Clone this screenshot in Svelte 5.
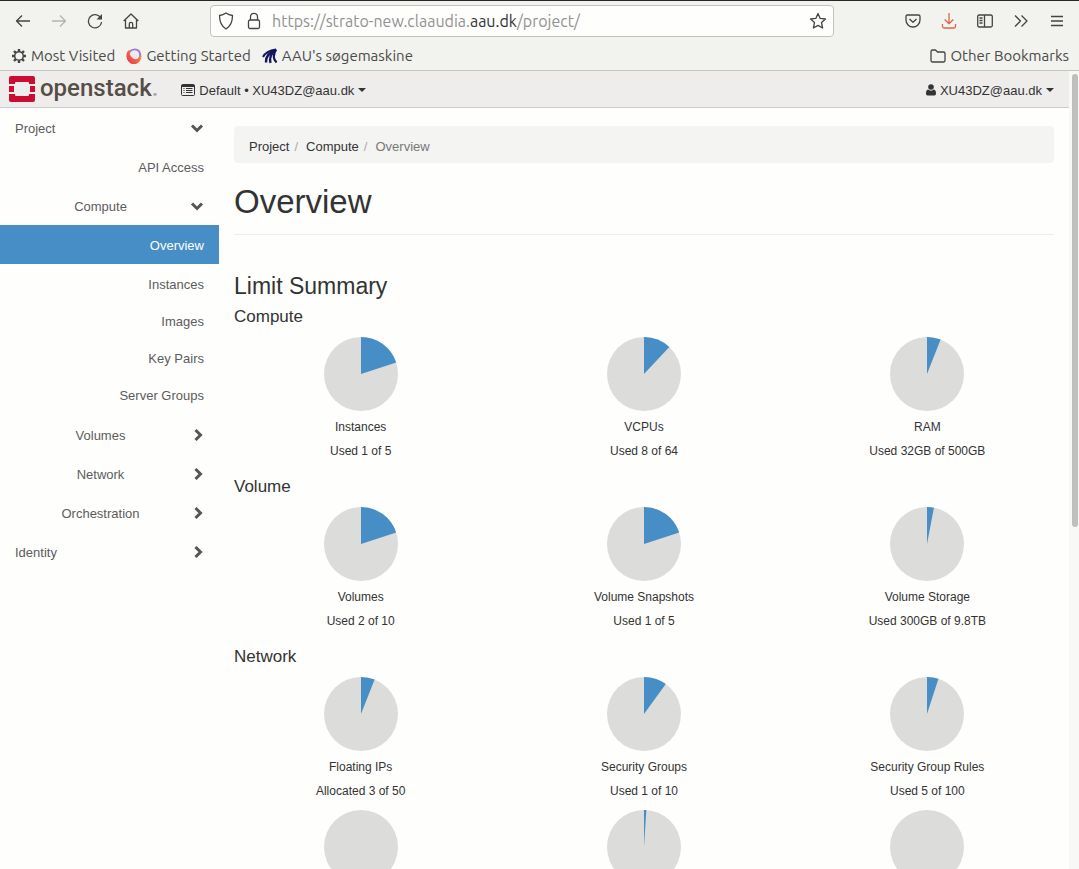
<script lang="ts">
  type NavItem = {
    label: string;
    level: 1 | 2 | 3;
    open?: boolean;
  };

  type Quota = {
    label?: string;
    usage?: string;
    share: number;
  };

  const topNav: NavItem[] = [
    { label: "Project", level: 1, open: true },
    { label: "API Access", level: 3 },
    { label: "Compute", level: 2, open: true },
  ];

  const computeNav = ["Overview", "Instances", "Images", "Key Pairs", "Server Groups"];

  const bottomNav: NavItem[] = [
    { label: "Volumes", level: 2, open: false },
    { label: "Network", level: 2, open: false },
    { label: "Orchestration", level: 2, open: false },
    { label: "Identity", level: 1, open: false },
  ];

  const sections: { title: string; quotas: Quota[] }[] = [
    {
      title: "Compute",
      quotas: [
        { label: "Instances", usage: "Used 1 of 5", share: 0.2 },
        { label: "VCPUs", usage: "Used 8 of 64", share: 0.12 },
        { label: "RAM", usage: "Used 32GB of 500GB", share: 0.06 },
      ],
    },
    {
      title: "Volume",
      quotas: [
        { label: "Volumes", usage: "Used 2 of 10", share: 0.2 },
        { label: "Volume Snapshots", usage: "Used 1 of 5", share: 0.2 },
        { label: "Volume Storage", usage: "Used 300GB of 9.8TB", share: 0.03 },
      ],
    },
    {
      title: "Network",
      quotas: [
        { label: "Floating IPs", usage: "Allocated 3 of 50", share: 0.06 },
        { label: "Security Groups", usage: "Used 1 of 10", share: 0.1 },
        { label: "Security Group Rules", usage: "Used 5 of 100", share: 0.05 },
        { share: 0 },
        { share: 0.01 },
        { share: 0 },
      ],
    },
  ];

  let active = $state("Overview");
  let url = $state("https://strato-new.claaudia.aau.dk/project/");

  function slice(share: number) {
    const angle = share * 2 * Math.PI;
    const x = 37 + 37 * Math.sin(angle);
    const y = 37 - 37 * Math.cos(angle);
    return `M37 37V0A37 37 0 ${share > 0.5 ? 1 : 0} 1 ${x} ${y}Z`;
  }
</script>

{#snippet chevron(open: boolean)}
  <svg class="chevron" width="14" height="14" viewBox="0 0 14 14" aria-hidden="true">
    <path d={open ? "M2 4.5l5 5 5-5" : "M5.5 2l5 5-5 5"} />
  </svg>
{/snippet}

{#snippet navRow(item: NavItem)}
  <a class="row level{item.level}" href="#{item.label}">
    <span class="row-label">{item.label}</span>
    {#if item.open !== undefined}
      {@render chevron(item.open)}
    {/if}
  </a>
{/snippet}

<div class="window">
  <div class="toolbar">
    <button class="tool" aria-label="Back">
      <svg width="16" height="16" viewBox="0 0 16 16"><path d="M15 8H1.5M7 2.5L1.5 8 7 13.5" /></svg>
    </button>
    <button class="tool faded" aria-label="Forward" disabled>
      <svg width="16" height="16" viewBox="0 0 16 16"><path d="M1 8h13.5M9 2.5L14.5 8 9 13.5" /></svg>
    </button>
    <button class="tool" aria-label="Reload">
      <svg width="16" height="16" viewBox="0 0 16 16">
        <path d="M13.8 5A6.600 6.600 0 1 0 14.600 9" />
        <path d="M15 1v5.500H9.500z" fill="#444" stroke="none" />
      </svg>
    </button>
    <button class="tool" aria-label="Home">
      <svg width="16" height="16" viewBox="0 0 16 16">
        <path d="M.7 8L8 1l7.300 7M2.500 6.500V15h11V6.500M6.300 15v-4a1.700 1.700 0 0 1 3.400 0v4" />
      </svg>
    </button>

    <div class="urlbar">
      <svg class="line" width="16" height="18" viewBox="0 0 16 18" aria-hidden="true">
        <path d="M8 1C6 2.500 3.500 3.300 1.500 3.500c0 6 1.500 10.500 6.500 13.500 5-3 6.500-7.500 6.500-13.500C12.500 3.300 10 2.500 8 1z" />
      </svg>
      <svg class="line lock" width="14" height="18" viewBox="0 0 14 18" aria-hidden="true">
        <rect x="1.500" y="8" width="11" height="8.500" rx="1.500" />
        <path d="M3.500 8V4.800a3.500 3.500 0 0 1 7 0V8" />
      </svg>
      <div class="address">
        <input type="text" aria-label="Address" bind:value={url} />
        <span class="pretty" aria-hidden="true">https://strato-new.claaudia.<b>aau.dk</b>/project/</span>
      </div>
      <button class="star" aria-label="Bookmark this page">
        <svg class="line" width="18" height="18" viewBox="0 0 18 18">
          <path d="M9 1.500l2.200 4.900 5.300.600-4 3.600 1.100 5.400L9 13.400 4.400 16l1.100-5.400-4-3.600 5.300-.6z" />
        </svg>
      </button>
    </div>

    <button class="tool" aria-label="Save to Pocket">
      <svg width="16" height="16" viewBox="0 0 16 16">
        <path d="M2.500 2h11a1.500 1.500 0 0 1 1.500 1.500V7A7 7 0 0 1 1 7V3.500A1.500 1.500 0 0 1 2.500 2z" />
        <path d="M4.500 6L8 9.300 11.500 6" />
      </svg>
    </button>
    <button class="tool download" aria-label="Downloads">
      <svg width="16" height="16" viewBox="0 0 16 16">
        <path d="M8 0v10.500M3.700 6.500L8 10.700l4.300-4.200M1.500 11v2.500A1.500 1.500 0 0 0 3 15h10a1.500 1.500 0 0 0 1.500-1.500V11" />
      </svg>
    </button>
    <button class="tool" aria-label="Sidebars">
      <svg width="16" height="16" viewBox="0 0 16 16">
        <rect x=".7" y="2" width="14.600" height="12" rx="1.500" />
        <path d="M7.500 2v12M2.500 5H5.500M2.500 7.500H5.500M2.500 10H5.500" />
      </svg>
    </button>
    <button class="tool" aria-label="More tools">
      <svg width="16" height="16" viewBox="0 0 16 16"><path d="M2 2.500L7.500 8 2 13.500M8.500 2.500L14 8l-5.500 5.500" /></svg>
    </button>
    <button class="tool" aria-label="Open application menu">
      <svg width="16" height="16" viewBox="0 0 16 16"><path d="M2 3.500h12M2 8h12M2 12.500h12" /></svg>
    </button>
  </div>

  <div class="bookmarks">
    <a href="#most-visited">
      <svg width="16" height="16" viewBox="0 0 16 16" aria-hidden="true">
        <circle cx="8" cy="8" r="4.300" fill="none" stroke="#444" stroke-width="1.500" />
        <path
          d="M8 1v2.500M8 12.500V15M1 8h2.500M12.500 8H15M3 3l1.800 1.800M11.200 11.200L13 13M3 13l1.800-1.800M11.200 4.800L13 3"
          stroke="#444"
          stroke-width="2.400"
        />
      </svg>
      Most Visited
    </a>
    <a href="#getting-started">
      <svg width="16" height="16" viewBox="0 0 16 16" aria-hidden="true">
        <defs>
          <linearGradient id="flame" x1="1" y1="0" x2="0" y2="1">
            <stop offset="0" stop-color="#ffc34a" />
            <stop offset=".5" stop-color="#f5673b" />
            <stop offset="1" stop-color="#e0305e" />
          </linearGradient>
        </defs>
        <circle cx="8" cy="8.500" r="7.500" fill="url(#flame)" />
        <circle cx="9" cy="6.500" r="6" fill="#8f7bd8" />
        <circle cx="8.500" cy="7" r="4.800" fill="#f3e8ee" />
        <path d="M.8 5c.7-1.800 1.700-2.800 2.700-3.300C3 5 4 8 7 10.500c2.500 1.500 6 .5 8-3.500.5 5-3 9-7 9-5 0-8-5-7.200-11z" fill="url(#flame)" />
      </svg>
      Getting Started
    </a>
    <a href="#aau">
      <svg width="16" height="16" viewBox="0 0 16 16" aria-hidden="true" fill="none" stroke="#14145e">
        <path d="M1 9C3 5 7 2.500 14 1.500" stroke-width="2" />
        <path d="M4 14.500C3.500 9.500 6 5 14 2" stroke-width="2.500" />
        <path d="M8.500 15C7 10 8.500 6 14 1.500" stroke-width="2.200" />
        <path d="M14.500 14.500C11.500 11.500 10.800 7 14 1.500" stroke-width="2.200" />
      </svg>
      AAU's søgemaskine
    </a>
    <a class="other" href="#other-bookmarks">
      <svg class="line" width="16" height="16" viewBox="0 0 16 16" aria-hidden="true">
        <path d="M1 12.500v-9A1.500 1.500 0 0 1 2.500 2h3L7.500 4h6A1.500 1.500 0 0 1 15 5.500v7a1.500 1.500 0 0 1-1.500 1.500h-11A1.500 1.500 0 0 1 1 12.500z" />
      </svg>
      Other Bookmarks
    </a>
  </div>

  <div class="viewport">
    <div class="page">
      <header>
        <a class="brand" href="#home">
          <svg width="28" height="28" viewBox="0 0 28 28" aria-hidden="true" fill="#cb0d33">
            <path d="M3 1h22a2 2 0 0 1 2 2v6h-6V8a1 1 0 0 0-1-1H8a1 1 0 0 0-1 1v1H1V3a2 2 0 0 1 2-2z" />
            <path d="M1 11h5v6H1zM22 11h5v6h-5z" />
            <path d="M3 27h22a2 2 0 0 0 2-2v-6h-6v1a1 1 0 0 1-1 1H8a1 1 0 0 1-1-1v-1H1v6a2 2 0 0 0 2 2z" />
          </svg>
          <span>openstack<i>.</i></span>
        </a>
        <button class="picker">
          <svg width="14" height="12" viewBox="0 0 14 12" aria-hidden="true">
            <path d="M1.500.5h11a1 1 0 0 1 1 1v9a1 1 0 0 1-1 1h-11a1 1 0 0 1-1-1v-9a1 1 0 0 1 1-1z" fill="none" stroke="#333" />
            <path d="M.5 1h13v2H.5z" fill="#333" />
            <path d="M2.500 4.500h1M5 4.500h6.500M2.500 6.500h1M5 6.500h6.500M2.500 8.500h1M5 8.500h6.500" stroke="#333" />
          </svg>
          <span>Default • XU43DZ@aau.dk</span>
          <span class="caret"></span>
        </button>
        <button class="picker user">
          <svg width="10" height="12" viewBox="0 0 10 12" aria-hidden="true" fill="#333">
            <circle cx="5" cy="3" r="2.800" />
            <path d="M2 5.500c2 1.500 4 1.500 6 0 1.500.5 2 2 2 4 0 1.300-.6 2-1.600 2H1.600C.6 11.500 0 10.800 0 9.500c0-2 .5-3.500 2-4z" />
          </svg>
          <span>XU43DZ@aau.dk</span>
          <span class="caret"></span>
        </button>
      </header>

      <div class="columns">
        <nav class="sidebar" aria-label="Dashboards">
          {#each topNav as item (item.label)}
            {@render navRow(item)}
          {/each}
          <div class="panels">
            {#each computeNav as label (label)}
              <a class="panel" class:active={active === label} href="#{label}" onclick={() => (active = label)}>
                {label}
              </a>
            {/each}
          </div>
          {#each bottomNav as item (item.label)}
            {@render navRow(item)}
          {/each}
        </nav>

        <main>
          <ol class="breadcrumb">
            <li><a href="#project">Project</a></li>
            <li><a href="#compute">Compute</a></li>
            <li>Overview</li>
          </ol>
          <h1>Overview</h1>
          <h2>Limit Summary</h2>
          {#each sections as section (section.title)}
            <section>
              <h3>{section.title}</h3>
              <div class="quotas">
                {#each section.quotas as quota}
                  <div class="quota">
                    <svg width="74" height="74" viewBox="0 0 74 74" aria-hidden="true">
                      <circle cx="37" cy="37" r="37" fill="#dcdcda" />
                      {#if quota.share > 0}
                        <path d={slice(quota.share)} fill="#468ec5" />
                      {/if}
                    </svg>
                    {#if quota.label}
                      <span>{quota.label}</span>
                      <span>{quota.usage}</span>
                    {/if}
                  </div>
                {/each}
              </div>
            </section>
          {/each}
        </main>
      </div>
    </div>
    <div class="scrollbar"><div class="thumb"></div></div>
  </div>
</div>

<style>
  :global(body) {
    margin: 0;
  }
  .window {
    display: flex;
    flex-direction: column;
    height: 100vh;
    overflow: hidden;
    box-sizing: border-box;
    border-top: 1px solid #2c2528;
    background: #fefefd;
    color: #333;
    font-family: "Liberation Sans", Arial, sans-serif;
    font-size: 13px;
  }
  button {
    display: flex;
    align-items: center;
    justify-content: center;
    padding: 0;
    border: none;
    background: none;
    color: inherit;
    font: inherit;
    cursor: pointer;
  }
  a {
    color: inherit;
    text-decoration: none;
  }
  svg {
    flex: none;
  }

  .toolbar,
  .bookmarks {
    display: flex;
    flex: none;
    align-items: center;
    background: #f2f2ef;
    color: #4a4a4a;
    font-family: Ubuntu, "Noto Sans", sans-serif;
  }
  .toolbar {
    height: 40px;
    padding: 0 4px 0 5px;
    font-size: 16px;
  }
  .tool {
    width: 36px;
    height: 36px;
  }
  .tool svg,
  .line {
    fill: none;
    stroke: #444;
    stroke-width: 1.3;
    stroke-linejoin: round;
  }
  .tool.faded svg {
    stroke: #b4b4b0;
  }
  .tool.download svg {
    stroke: #d9674a;
  }
  .urlbar {
    display: flex;
    flex: 1;
    align-items: center;
    height: 30px;
    margin: 0 61px;
    padding: 0 6px 0 7px;
    border: 1px solid #c2c2be;
    border-radius: 4px;
    background: #fefefd;
  }
  .lock {
    margin: 0 11px 0 13px;
  }
  .address {
    display: grid;
    flex: 1;
    min-width: 0;
    align-items: center;
  }
  .address input,
  .pretty {
    grid-area: 1 / 1;
    color: #929292;
    line-height: 22px;
    white-space: nowrap;
  }
  .address input {
    min-width: 0;
    padding: 0;
    border: none;
    outline: none;
    background: none;
    color: transparent;
    font: inherit;
  }
  .pretty {
    pointer-events: none;
  }
  .pretty b {
    color: #333;
    font-weight: 400;
  }
  .address input:focus {
    color: #333;
  }
  .address input:focus + .pretty {
    visibility: hidden;
  }

  .bookmarks {
    gap: 11px;
    height: 29px;
    padding: 0 10px 0 11px;
    border-bottom: 1px solid #c4c4c2;
    font-size: 15px;
  }
  .bookmarks a {
    display: flex;
    align-items: center;
    gap: 4px;
    white-space: nowrap;
  }
  .bookmarks .other {
    margin-left: auto;
  }

  .viewport {
    display: flex;
    flex: 1;
    min-height: 0;
  }
  .page {
    flex: 1;
    min-width: 0;
    overflow: hidden;
  }
  .scrollbar {
    box-sizing: border-box;
    width: 10px;
    padding: 3px 1px 0 3px;
    background: #f8f8f7;
  }
  .thumb {
    height: 57%;
    border-radius: 3px;
    background: #bfbfbd;
  }

  header {
    display: flex;
    align-items: center;
    height: 36px;
    padding: 0 15px 0 8px;
    border-bottom: 1px solid #ccc;
    background: #eeedec;
  }
  .brand {
    display: flex;
    align-items: center;
    gap: 4px;
    color: #564d46;
    font-family: Roboto, sans-serif;
    font-size: 24px;
    font-weight: 500;
    line-height: 28px;
  }
  .brand span {
    padding-bottom: 2px;
  }
  .brand i {
    color: #aaa;
    font-style: normal;
  }
  .picker {
    gap: 4px;
    margin-left: 23px;
    padding-top: 2px;
    white-space: nowrap;
  }
  .user {
    margin-left: auto;
  }
  .caret {
    border: 4px solid transparent;
    border-top-color: #333;
    border-bottom: none;
  }

  .columns {
    display: flex;
  }
  .sidebar {
    flex: none;
    width: 219px;
    color: #5c5c5c;
  }
  .row,
  .panel {
    display: flex;
    align-items: center;
    box-sizing: border-box;
    height: 39px;
    padding: 1px 15px 0;
  }
  .row-label {
    flex: 1;
    margin-right: 4px;
  }
  .level2 {
    text-align: center;
  }
  .level3 {
    text-align: right;
  }
  .level3 .row-label {
    margin-right: 0;
  }
  .panels {
    padding-bottom: 2px;
  }
  .panel {
    justify-content: flex-end;
    height: 37px;
  }
  .panel.active {
    height: 39px;
    margin-bottom: 1px;
    background: #468ec5;
    color: #fff;
  }
  .chevron {
    fill: none;
    stroke: #555;
    stroke-width: 3;
  }

  main {
    flex: 1;
    min-width: 0;
    padding: 18px 15px 0;
  }
  .breadcrumb {
    display: flex;
    margin: 0;
    padding: 4px 15px 0;
    border-radius: 4px;
    background: #f4f4f3;
    color: #777;
    line-height: 33px;
    list-style: none;
  }
  .breadcrumb a {
    color: #333;
  }
  .breadcrumb li + li::before {
    content: "/";
    padding: 0 8px 0 5px;
    color: #aaa;
  }
  h1,
  h2,
  h3 {
    margin: 0;
    font-weight: 400;
  }
  h1 {
    margin-top: 20px;
    padding-bottom: 13px;
    border-bottom: 1px solid #eee;
    font-size: 33px;
    line-height: 38px;
  }
  h2 {
    margin-top: 38px;
    font-size: 23px;
    line-height: 26px;
  }
  h3 {
    padding: 8px 0 11px;
    font-size: 17px;
    line-height: 19px;
  }
  .quotas {
    display: grid;
    grid-template-columns: repeat(3, 1fr);
    margin: 0 -15px -1px;
  }
  .quota {
    display: flex;
    flex-direction: column;
    align-items: center;
    padding-bottom: 7px;
    font-size: 12px;
    line-height: 24px;
  }
  .quota svg {
    margin-bottom: 4px;
  }
</style>
